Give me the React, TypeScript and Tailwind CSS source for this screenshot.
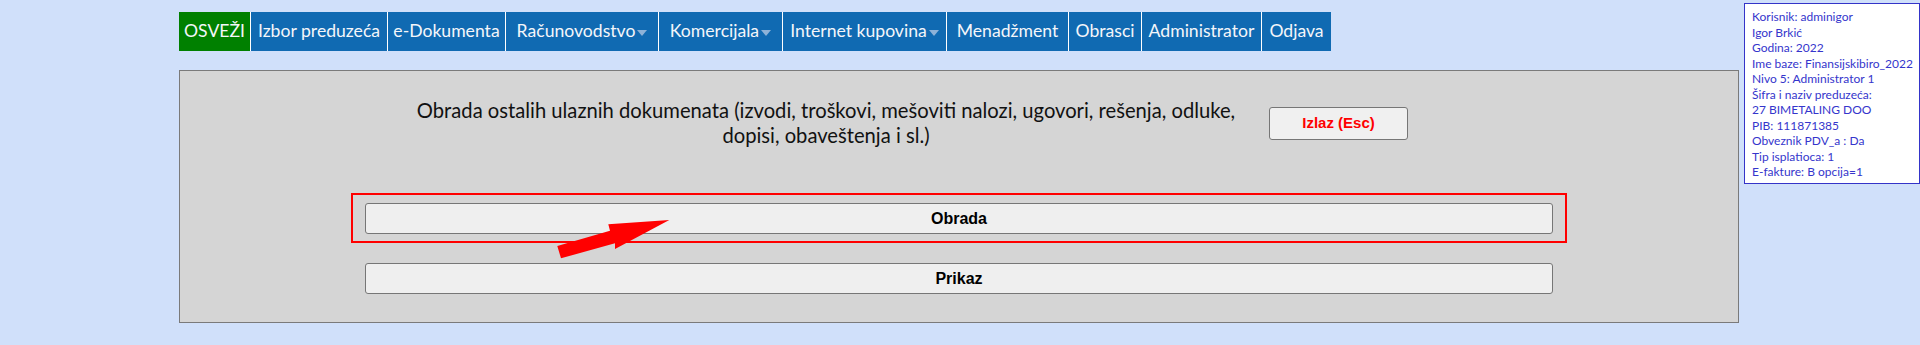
import React from "react";

interface NavItem {
  label: string;
  width: string;
  dropdown?: boolean;
  green?: boolean;
}

const navItems: NavItem[] = [
  { label: "OSVEŽI", width: "w-[72px]", green: true },
  { label: "Izbor preduzeća", width: "w-[137px]" },
  { label: "e-Dokumenta", width: "w-[118px]" },
  { label: "Računovodstvo", width: "w-[153px]", dropdown: true },
  { label: "Komercijala", width: "w-[124px]", dropdown: true },
  { label: "Internet kupovina", width: "w-[164px]", dropdown: true },
  { label: "Menadžment", width: "w-[122px]" },
  { label: "Obrasci", width: "w-[73px]" },
  { label: "Administrator", width: "w-[120px]" },
  { label: "Odjava", width: "w-[69px]" },
];

const userInfo = [
  "Korisnik: adminigor",
  "Igor Brkić",
  "Godina: 2022",
  "Ime baze: Finansijskibiro_2022",
  "Nivo 5: Administrator 1",
  "Šifra i naziv preduzeća:",
  "27 BIMETALING DOO",
  "PIB: 111871385",
  "Obveznik PDV_a : Da",
  "Tip isplatioca: 1",
  "E-fakture: B opcija=1",
];

const App: React.FC = () => {
  return (
    <div className="relative min-h-screen bg-[#d0e0fa] font-['Lato',sans-serif]">
      <div className="w-[1739px] pl-[179px] pt-[12px]">
        {/* top menu */}
        <nav className="flex h-[39px] divide-x divide-white">
          {navItems.map((item) => (
            <div
              key={item.label}
              className={`${item.width} flex h-full items-center justify-center text-[17.6px] text-[#f4f6fa] ${
                item.green ? "bg-[#008000]" : "bg-[#106ab2]"
              }`}
            >
              <span>{item.label}</span>
              {item.dropdown && (
                <span className="ml-[2px] mt-[3px] h-0 w-0 border-x-[5px] border-t-[6px] border-x-transparent border-t-[#8db2d8]" />
              )}
            </div>
          ))}
        </nav>

        {/* main panel */}
        <div className="mt-[19px] h-[253px] border border-[#7a7a7a] bg-[#d5d5d5]">
          <div className="flex items-center pt-[27px]">
            <p className="ml-[214px] w-[864px] text-center text-[20.2px] leading-[25px] text-[#111]">
              Obrada ostalih ulaznih dokumenata (izvodi, troškovi, mešoviti nalozi, ugovori, rešenja, odluke,
              <br />
              dopisi, obaveštenja i sl.)
            </p>
            <button className="ml-[11px] h-[33px] w-[139px] rounded-[3px] border border-[#767676] bg-[#f0f0f0] font-['Liberation_Sans',Arial,sans-serif] text-[15px] font-bold text-[#ff0000]">
              Izlaz (Esc)
            </button>
          </div>

          <div className="mt-[45px] flex flex-col items-center">
            <div className="border-2 border-[#ff0000] px-[12px] pb-[7px] pt-[8px]">
              <button className="block h-[31px] w-[1188px] rounded-[3px] border border-[#767676] bg-[#efefef] font-['Liberation_Sans',Arial,sans-serif] text-[16px] font-bold text-black">
                Obrada
              </button>
            </div>
            <button className="mt-[20px] h-[31px] w-[1188px] rounded-[3px] border border-[#767676] bg-[#efefef] font-['Liberation_Sans',Arial,sans-serif] text-[16px] font-bold text-black">
              Prikaz
            </button>
          </div>
        </div>
      </div>

      {/* red pointer arrow */}
      <svg className="absolute left-[550px] top-[215px]" width="125" height="50" viewBox="0 0 125 50">
        <polygon points="7.3,31 11,43.3 65,28.3 65,34 119.3,5 58.3,9.3 60,15.7" fill="#ff0000" />
      </svg>

      {/* user info box */}
      <aside className="absolute left-[1744px] top-[3px] h-[181px] w-[176px] border border-[#3434c8] bg-white pl-[7px] pt-[5px] text-[12px] leading-[15.5px] text-[#3535cc]">
        {userInfo.map((line) => (
          <div key={line} className="whitespace-nowrap">
            {line}
          </div>
        ))}
      </aside>
    </div>
  );
};

export default App;
